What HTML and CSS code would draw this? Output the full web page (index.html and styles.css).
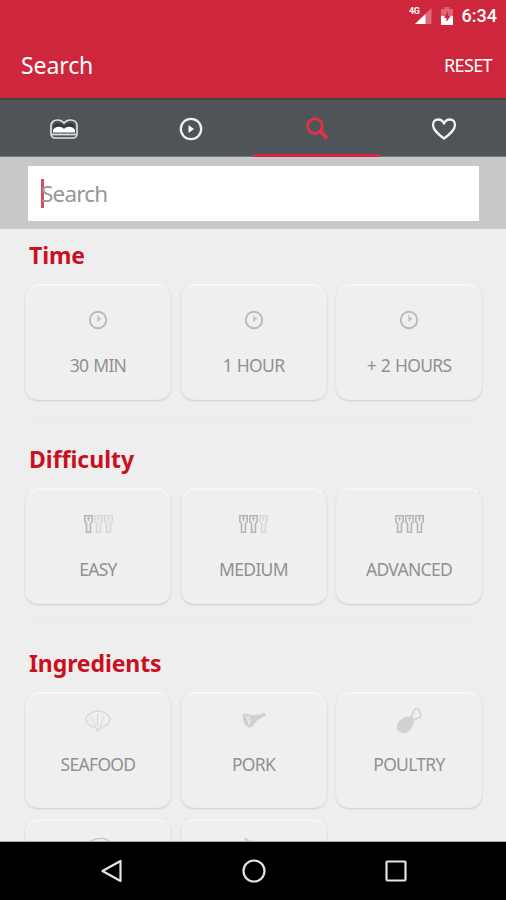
FILE: index.html
```html
<!DOCTYPE html>
<html lang="en">
<head>
    <meta charset="UTF-8">
    <meta name="viewport" content="width=device-width, initial-scale=1.0">
    <title>Search</title>
    <link rel="stylesheet" href="styles.css">
</head>
<body>
    <svg class="defs" width="0" height="0">
        <symbol id="clock" viewBox="0 0 20 20">
            <circle cx="10" cy="10" r="8.2" fill="none" stroke="#b9b9b9" stroke-width="1.9"/>
            <path d="M9.300 4.500v7.500l4.500-3.500-2.500-1z" fill="#c2c2c2"/>
        </symbol>
        <symbol id="spoon" viewBox="0 0 9 18">
            <path d="M.8.8h7.400v6L6.500 8.500v8.700h-4V8.500L.8 6.800z" fill="#ebebeb" stroke="currentColor" stroke-width="1.5"/>
            <path d="M4.500 2v4M3 3.500h3" fill="none" stroke="currentColor"/>
        </symbol>
    </svg>

    <div class="screen">
        <header>
            <div class="status">
                <svg width="24" height="20" viewBox="0 0 24 20">
                    <path d="M22.500 2v16H6z" fill="#e0697b"/>
                    <path d="M16.500 8v10H6z" fill="#fff"/>
                    <text x="0" y="8" class="network">4G</text>
                </svg>
                <svg class="battery" width="12" height="18" viewBox="0 0 12 18">
                    <path d="M3.500 0h5v2H12v16H0V2h3.500z" fill="#dc6577"/>
                    <path d="M0 9h12v9H0z" fill="#fff"/>
                    <path d="M7 4L3 11h2.500v4L9.500 9H7z" fill="#ce263d"/>
                </svg>
                <span>6:34</span>
            </div>
            <div class="title-bar">
                <h1>Search</h1>
                <a class="reset">RESET</a>
            </div>
        </header>

        <nav>
            <a class="tab">
                <svg width="28" height="20" viewBox="0 0 28 20" fill="none" stroke="#dde0e1" stroke-width="1.700">
                    <path d="M1 7c0-4 3-6 6.500-6C10 1 12.500 2 14 4c1.500-2 4-3 6.500-3C24 1 27 3 27 7v8c0 2-1.500 4-4 4H5c-2.500 0-4-2-4-4z"/>
                    <path d="M3.500 9V7c2-4 7-4 10.500 0 3.500-4 8.500-4 10.500 0v2c-3-2-7-2-10.500 0-3.500-2-7.500-2-10.500 0z" fill="#34393b" stroke="none"/>
                    <path d="M3 11c3-4 8-4 11-1 3-3 8-3 11 1v2.500H3z" fill="#fff" stroke="none"/>
                    <path d="M2 15.500h24"/>
                </svg>
            </a>
            <a class="tab">
                <svg width="24" height="24" viewBox="0 0 24 24">
                    <circle cx="12" cy="12" r="10.200" fill="none" stroke="#edf0f1" stroke-width="2.300"/>
                    <path d="M9.500 8v8l5.500-4z" fill="#fff"/>
                </svg>
            </a>
            <a class="tab active">
                <svg width="22" height="22" viewBox="0 0 22 22" fill="none" stroke="#e5304a">
                    <circle cx="9" cy="9" r="7.400" stroke-width="2.900"/>
                    <path d="M14 14l7 7" stroke-width="3.900"/>
                </svg>
            </a>
            <a class="tab">
                <svg width="26" height="22" viewBox="0 0 26 22">
                    <path d="M13 20.500C7 16 2 12 2 7c0-3 2-5.500 5-5.500 3 0 5 1.500 6 4 1-2.500 3-4 6-4s5 2.500 5 5.500c0 5-5 9-11 13.500z" fill="none" stroke="#f1f3f3" stroke-width="2.300" stroke-linejoin="round"/>
                </svg>
            </a>
        </nav>

        <div class="search-bar">
            <div class="search-box"><span class="cursor"></span>Search</div>
        </div>

        <main>
            <section>
                <h2>Time</h2>
                <div class="cards">
                    <div class="card"><svg class="icon" width="20" height="20"><use href="#clock"/></svg><span>30 MIN</span></div>
                    <div class="card"><svg class="icon" width="20" height="20"><use href="#clock"/></svg><span>1 HOUR</span></div>
                    <div class="card"><svg class="icon" width="20" height="20"><use href="#clock"/></svg><span>+ 2 HOURS</span></div>
                </div>
            </section>

            <section>
                <h2 class="difficulty">Difficulty</h2>
                <div class="cards">
                    <div class="card">
                        <div class="icon spoons"><svg><use href="#spoon"/></svg><svg class="off"><use href="#spoon"/></svg><svg class="off"><use href="#spoon"/></svg></div>
                        <span>EASY</span>
                    </div>
                    <div class="card">
                        <div class="icon spoons"><svg><use href="#spoon"/></svg><svg><use href="#spoon"/></svg><svg class="off"><use href="#spoon"/></svg></div>
                        <span>MEDIUM</span>
                    </div>
                    <div class="card">
                        <div class="icon spoons"><svg><use href="#spoon"/></svg><svg><use href="#spoon"/></svg><svg><use href="#spoon"/></svg></div>
                        <span>ADVANCED</span>
                    </div>
                </div>
            </section>

            <section class="ingredients">
                <h2>Ingredients</h2>
                <div class="cards">
                    <div class="card">
                        <svg class="icon" width="26" height="22" viewBox="0 0 26 22" fill="none" stroke="#d8d8d8" stroke-width="1.400">
                            <path d="M10 17C6 17 1 14 1 9c0-3 2-4 4-5 2-2 4-3 8-3s6 1 8 3c2 1 4 2 4 5 0 5-5 8-9 8l-3 4z"/>
                            <path d="M11 16L6 7M12.500 16V4M15 16l4-9" stroke-width="1"/>
                        </svg>
                        <span>SEAFOOD</span>
                    </div>
                    <div class="card">
                        <svg class="icon" width="26" height="22" viewBox="0 0 26 22">
                            <path d="M2 4c4-1 8 2 13 1l6-1 2-2 1 2 1 2-3 .5-6 4c-2 3-4 7-8 7-4-1-7-8-6-13.500z" fill="#cfcfcf"/>
                            <path d="M4 6c2 1 4 5 4 9M7 6c2 2 3 4 2 7" fill="none" stroke="#e9e9e9" stroke-width="1.300"/>
                        </svg>
                        <span>PORK</span>
                    </div>
                    <div class="card">
                        <svg class="icon" width="26" height="26" viewBox="0 0 26 26">
                            <path d="M15 9c-5-2-13 3-14 9-1 5 4 8 9 7 5-2 8-8 8-13z" fill="#d0d1d1"/>
                            <path d="M15 9l2-3c0-3 1-5 4-5 2 0 3 2 3 4 2 2 1 5-2 5l-4 2z" fill="#eee" stroke="#d0d1d1" stroke-width="1.500"/>
                        </svg>
                        <span>POULTRY</span>
                    </div>
                    <div class="card">
                        <svg class="icon" width="26" height="22" viewBox="0 0 26 22" fill="none" stroke="#cacaca" stroke-width="1.400">
                            <path d="M3 6c2-3 5-3 8-4 4-1 11-1 12 2 2 3 1 8-2 11H6C2 14 1 9 3 6z"/>
                        </svg>
                    </div>
                    <div class="card">
                        <svg class="icon" width="26" height="22" viewBox="0 0 26 22">
                            <path d="M3 0l4 2 1 2 3-1v4l2 8H6L5 6z" fill="#cfcfcf"/>
                        </svg>
                    </div>
                </div>
            </section>
        </main>

        <footer>
            <svg width="24" height="24" viewBox="0 0 24 24"><path d="M20.500 2v20L2.500 12z"/></svg>
            <svg width="24" height="24" viewBox="0 0 24 24"><circle cx="12" cy="12" r="10.500"/></svg>
            <svg width="24" height="24" viewBox="0 0 24 24"><rect x="2.500" y="2.500" width="19" height="19" rx="1"/></svg>
        </footer>
    </div>
</body>
</html>
```
FILE: styles.css
```css
* {
    box-sizing: border-box;
}
body {
    margin: 0;
    font-family: "Noto Sans", sans-serif;
    background-color: #eee;
}
.defs {
    position: absolute;
}
.screen {
    display: flex;
    flex-direction: column;
    height: 900px;
    overflow: hidden;
}
header {
    height: 98px;
    flex: none;
    background-color: #ce263d;
    color: #fff;
}
.status {
    display: flex;
    align-items: center;
    justify-content: flex-end;
    height: 32px;
    padding-right: 9px;
    font: 500 18px/32px Roboto, sans-serif;
}
.network {
    font: bold 9px Roboto, sans-serif;
    letter-spacing: -0.5px;
    fill: #fff;
}
.battery {
    margin: 0 9px 0 8px;
}
.title-bar {
    display: flex;
    align-items: center;
    justify-content: space-between;
    height: 66px;
    padding: 0 14px 0 21px;
}
h1 {
    margin: 0;
    font-size: 23px;
    font-weight: 400;
    letter-spacing: -0.1px;
}
.reset {
    font-size: 18px;
    letter-spacing: -0.6px;
}
nav {
    display: flex;
    flex: none;
    height: 59px;
    background-color: #4e5457;
    border-top: 2px solid #424346;
    border-bottom: 1px solid #75787a;
}
.tab {
    flex: 1;
    display: flex;
    align-items: center;
    justify-content: center;
    padding: 1px 0 0 2px;
}
.tab.active {
    padding-top: 2px;
    border-bottom: 3px solid #d52742;
    margin-bottom: -1px;
}
.search-bar {
    flex: none;
    height: 72px;
    padding: 9px 27px 8px 28px;
    background-color: #c7c8ca;
}
.search-box {
    display: flex;
    align-items: center;
    height: 55px;
    padding-left: 13px;
    background-color: #fff;
    color: #969696;
    font-size: 22.5px;
    letter-spacing: -0.8px;
}
.cursor {
    width: 3px;
    height: 29px;
    margin-right: -3px;
    background-color: #d44c5e;
}
main {
    flex: 1;
    min-height: 0;
    overflow: hidden;
    padding: 0 24px 0 25px;
    border-bottom: 1px solid #aaa;
}
section {
    height: 204px;
}
h2 {
    margin: 0;
    height: 55px;
    padding-left: 4px;
    color: #c9101f;
    font-size: 23px;
    font-weight: 700;
    line-height: 53px;
    letter-spacing: -0.1px;
}
.difficulty {
    letter-spacing: 0;
}
.cards {
    display: grid;
    grid-template-columns: repeat(3, 146px);
    gap: 11px 9.5px;
    position: relative;
}
section:not(.ingredients) .cards::after {
    content: "";
    position: absolute;
    left: 6px;
    right: 4px;
    bottom: -19px;
    height: 2px;
    background-color: #ebebeb;
}
.card {
    display: flex;
    flex-direction: column;
    align-items: center;
    height: 116px;
    padding-top: 25px;
    background-color: #efefef;
    border: 1px solid #ebebeb;
    border-top-color: #f7f7f7;
    border-radius: 13px;
    box-shadow: 0 1px 2px #ccc, inset 0 1px 1px #f8f8f8;
}
.card span {
    margin-top: 23px;
    color: #919191;
    font-size: 17.5px;
    line-height: 24px;
    letter-spacing: -0.7px;
    word-spacing: 1px;
}
.spoons {
    display: flex;
    gap: 1px;
    height: 20px;
    padding-top: 1px;
    color: #b4b4b4;
}
.spoons svg {
    width: 9px;
    height: 18px;
}
.spoons .off {
    color: #d8d8d8;
}
.ingredients .card {
    padding-top: 15px;
}
.ingredients .icon {
    height: 26px;
}
.ingredients .card span {
    margin-top: 18px;
}
footer {
    display: flex;
    align-items: center;
    justify-content: center;
    gap: 118px;
    flex: none;
    height: 58px;
    padding-left: 2px;
    background-color: #000;
}
footer svg {
    fill: none;
    stroke: #e5e5e5;
    stroke-width: 2.2;
    stroke-linejoin: round;
}
```
